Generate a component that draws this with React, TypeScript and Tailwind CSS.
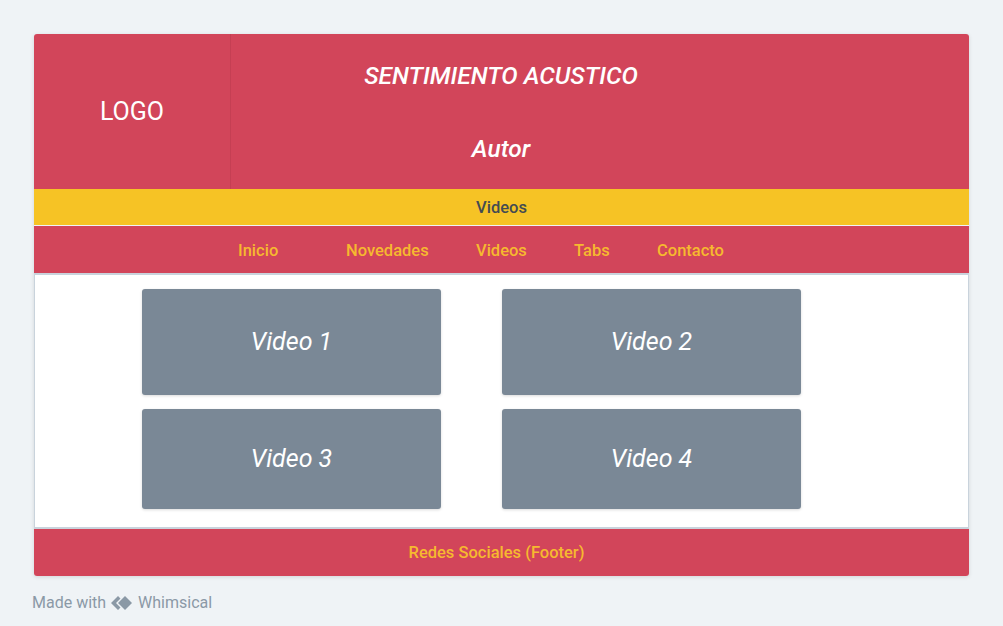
const font = { fontFamily: 'Roboto, "Noto Sans", sans-serif' }

const navLinks = [
  { label: 'Inicio', cls: 'w-[108px]' },
  { label: 'Novedades', cls: 'w-[130px]' },
  { label: 'Videos', cls: 'w-[98px]' },
  { label: 'Tabs', cls: 'w-[83px]' },
  { label: 'Contacto', cls: 'w-[90px]' },
]

function VideoCard({ label, tall }: { label: string; tall?: boolean }) {
  return (
    <div
      className={`w-[299px] ${tall ? 'h-[106px]' : 'h-[100px]'} rounded-[3px] bg-[#7a8896] shadow-[0_1px_3px_rgba(0,0,0,0.15)] flex items-center justify-center`}
    >
      <span className="text-[25px] italic text-white">{label}</span>
    </div>
  )
}

export default function App() {
  return (
    <div className="w-[1003px] h-[626px] bg-[#eff3f6] pt-[34px] pl-[34px]" style={font}>
      <div className="w-[935px] rounded-[3px] shadow-[0_1px_4px_rgba(0,0,0,0.12)] overflow-hidden">
        {/* header */}
        <div className="flex h-[155px] bg-[#d2455a]">
          <div className="w-[197px] border-r border-[#c53f53] flex items-center justify-center">
            <span className="text-[25px] text-white">LOGO</span>
          </div>
          <div className="flex-1 pr-[198px] flex flex-col items-center pt-[30px]">
            <span className="text-[24.5px] italic font-medium text-white leading-none">SENTIMIENTO ACUSTICO</span>
            <span className="mt-[48px] text-[24.5px] italic font-medium text-white leading-none">Autor</span>
          </div>
        </div>

        {/* breadcrumb */}
        <div className="h-[36px] bg-[#f6c325] flex items-center justify-center pt-[3px]">
          <span className="text-[16.5px] font-medium text-[#444b52]">Videos</span>
        </div>

        {/* nav */}
        <div className="mt-px h-[47px] bg-[#d2455a] flex items-center pl-[204px] pt-[3px]">
          {navLinks.map(({ label, cls }) => (
            <span key={label} className={`${cls} text-[16.5px] font-medium text-[#f6b92f]`}>
              {label}
            </span>
          ))}
        </div>

        {/* content */}
        <div className="h-[256px] bg-white border-y-2 border-x border-[#c9d3dc] pl-[107px] pt-[14px]">
          <div className="grid grid-cols-[299px_299px] gap-x-[61px] gap-y-[14px]">
            <VideoCard label="Video 1" tall />
            <VideoCard label="Video 2" tall />
            <VideoCard label="Video 3" />
            <VideoCard label="Video 4" />
          </div>
        </div>

        {/* footer */}
        <div className="h-[47px] bg-[#d2455a] flex items-center justify-center pr-[10px] pt-[2px]">
          <span className="text-[16.5px] font-medium text-[#f6b92f]">Redes Sociales (Footer)</span>
        </div>
      </div>

      <div className="mt-[15px] -ml-[2px] flex items-center gap-[5px] text-[16px] text-[#8b99a6]">
        <span>Made with</span>
        <svg width="22" height="14" viewBox="0 0 22 14" fill="#8b99a6">
          <path d="M7 0 L0 7 L7 14 L9.5 11.5 L5 7 L9.5 2.5 Z" />
          <path d="M14 0 L21 7 L14 14 L7 7 Z" />
        </svg>
        <span>Whimsical</span>
      </div>
    </div>
  )
}
